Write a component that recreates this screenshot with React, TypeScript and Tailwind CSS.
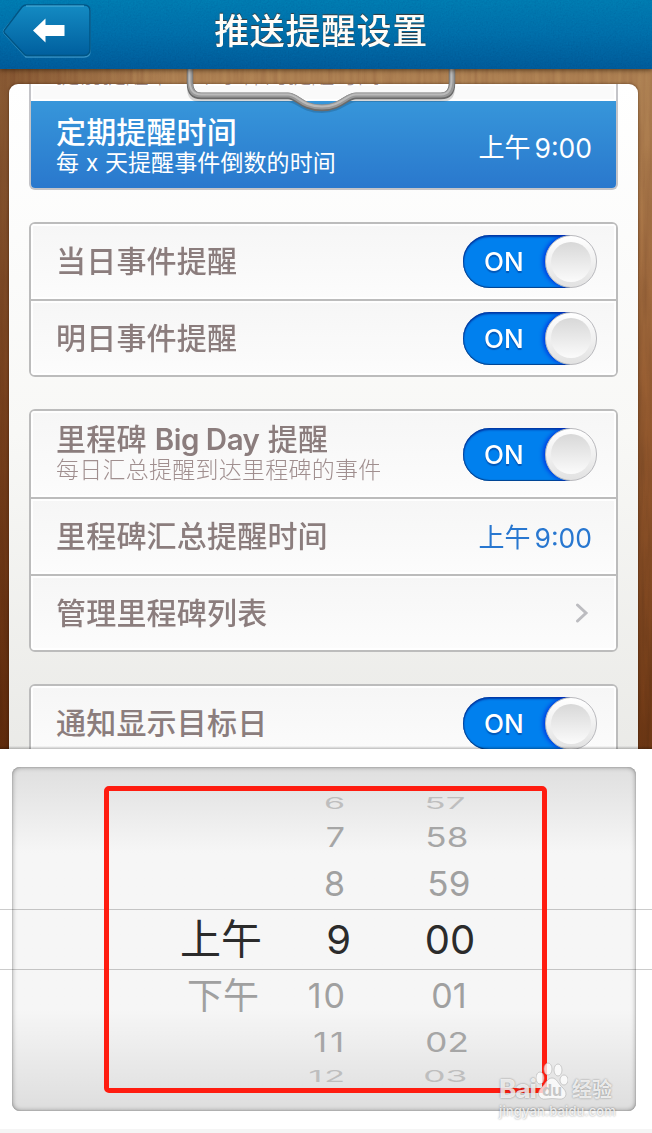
import React from "react";

const FONT = "font-['Inter','Noto_Sans_CJK_SC',sans-serif]";

function Header() {
  return (
    <header className="relative z-30 flex h-[69px] shrink-0 items-start justify-center bg-linear-to-b from-[#0070a8] via-[#0064a0] to-[#00528e] pr-[10px] shadow-[0_1px_5px_rgba(40,20,0,0.7)]">
      <svg className="absolute inset-0 opacity-20 mix-blend-overlay" width="652" height="69">
        <filter id="grain"><feTurbulence type="fractalNoise" baseFrequency="0.6" numOctaves="2" /><feColorMatrix values="0.33 0.33 0.33 0 0 0.33 0.33 0.33 0 0 0.33 0.33 0.33 0 0 0 0 0 0 1" /></filter>
        <rect width="652" height="69" filter="url(#grain)" />
      </svg>
      <svg className="absolute left-0 top-0" width="96" height="62" viewBox="0 0 96 62">
        <defs>
          <linearGradient id="btn" x1="0" y1="0" x2="0" y2="1">
            <stop offset="0" stopColor="#148bc3" />
            <stop offset="1" stopColor="#005f9e" />
          </linearGradient>
        </defs>
        <path d="M26 6 H84 Q90 6 90 12 V51 Q90 57 84 57 H26 L4 33 Q3 31.500 4 30 L22 8 Q24 5.500 26 6Z" fill="none" stroke="#4fa8d4" strokeOpacity=".7" strokeWidth="1.500" />
        <path d="M26 5 H84 Q90 5 90 11 V49 Q90 55.500 84 55.500 H27 Q25 55.500 23.500 53.500 L4.500 33 Q3.300 31.500 4.500 30 L22 7 Q24 5 26 5Z" fill="url(#btn)" stroke="#005585" strokeWidth="1.500" />
        <path d="M26 6 H84" stroke="#4fb2dc" strokeWidth="1" />
        <path d="M33 30.500 L45.500 18.500 V25 H64.500 V36 H45.500 V42.500Z" fill="#fff" />
      </svg>
      <h1 className="relative mt-[7px] text-[35px] leading-[48px] font-medium tracking-[0.6px] text-[#fffdf8] [text-shadow:0_-1px_1px_#3a3a3a]">推送提醒设置</h1>
    </header>
  );
}

function Toggle() {
  return (
    <div className="relative h-[53px] w-[134px] shrink-0">
      <div className="relative flex h-full w-[107px] items-center overflow-hidden rounded-l-full bg-[#0080ee] pl-[21px] shadow-[inset_0_2px_2px_rgba(0,20,130,0.65),inset_0_-1px_1px_rgba(0,50,120,0.8),inset_1px_0_1px_rgba(0,50,120,0.5)]">
        <span className="text-[26px] font-medium text-white [text-shadow:0_2px_1px_rgba(0,60,150,0.6)]">ON</span>
        <div className="absolute left-[82px] top-0 size-[53px] rounded-full shadow-[-2px_0_4px_rgba(0,30,220,0.75)]" />
      </div>
      <div className="absolute right-0 top-0 flex h-[53px] w-[52px] items-center justify-center rounded-full border border-[#b9b9bd] bg-linear-to-b from-white to-[#e2e2e2]">
        <div className="size-[40px] rounded-full bg-linear-to-b from-[#d8d8d8] to-[#fbfbfb]" />
      </div>
    </div>
  );
}

function Row({ title, sub, tall, last, children }: { title: React.ReactNode; sub?: string; tall?: boolean; last?: boolean; children: React.ReactNode }) {
  return (
    <div className={`flex items-center justify-between bg-linear-to-b from-[#f6f6f6] to-[#fcfcfc] pr-[19px] pl-[25px] shadow-[inset_0_0_0_2px_rgba(255,255,255,0.9)] ${tall ? "h-[88px]" : last ? "h-[74px]" : "h-[77px]"} ${last ? "" : "border-b-2 border-[#bcbcbc]"}`}>
      <div className="text-[#8b7d7d]">
        <div className={`text-[30px] font-medium tracking-[0.2px] whitespace-nowrap ${sub ? "mt-[-2px] leading-[34px]" : "-mt-[1px] leading-[40px]"}`}>{title}</div>
        {sub && <div className="text-[23px] leading-[28px] font-light tracking-[0.25px] text-[#a08f8f]">{sub}</div>}
      </div>
      {children}
    </div>
  );
}

const CARD = "mx-[20px] mt-[32px] shrink-0 overflow-hidden rounded-[6px] border-2 border-[#bcbcbc]";

function Time({ className }: { className: string }) {
  return <div className={`mr-[5px] flex items-center gap-[4px] text-[26.5px] leading-[36px] ${className}`}><span className="text-[26px]">上午</span><span>9:00</span></div>;
}

function Settings() {
  return (
    <main className="relative h-[680px] shrink-0 overflow-hidden bg-linear-to-b from-[#9f7048] via-[#7f4d28] to-[#5c2e10] pt-[15px]">
      <svg className="absolute inset-0 opacity-30 mix-blend-overlay" width="652" height="680">
        <filter id="wood"><feTurbulence type="fractalNoise" baseFrequency="0.18 0.012" numOctaves="3" seed="4" /><feColorMatrix values="0.33 0.33 0.33 0 0 0.33 0.33 0.33 0 0 0.33 0.33 0.33 0 0 0 0 0 0 1" /></filter>
        <rect width="652" height="680" filter="url(#wood)" />
      </svg>
      <div className="absolute inset-0 bg-linear-to-r from-[#4a1800]/40 via-transparent via-25% to-transparent" />
      <div className="relative ml-[9px] flex h-[700px] w-[629px] flex-col overflow-hidden rounded-t-[9px] bg-linear-to-b from-white via-[#f8f8f6] to-[#e9e9e6] shadow-[0_0_3px_rgba(40,15,0,0.6)]">
        <section className="mx-[20px] shrink-0 overflow-hidden rounded-b-[6px] border-x-2 border-b-2 border-[#c4c4c8]">
          <div className="relative h-[17px] overflow-hidden bg-[#fafafa] shadow-[inset_0_0_0_2px_#fff]">
            <p className="-mt-[23px] ml-[25px] text-[23px] leading-[28px] font-light tracking-[0.2px] text-[#a08f8f]">提前提醒下一个事件的提醒时间</p>
          </div>
          <div className="flex h-[87px] items-center justify-between bg-linear-to-b from-[#3796da] to-[#2a78cd] pr-[19px] pl-[25px] text-white">
            <div className="mt-[2px]">
              <div className="text-[30px] leading-[34px] font-medium tracking-[0.15px]">定期提醒时间</div>
              <div className="text-[23px] leading-[28px] tracking-[0.1px]">每 x 天提醒事件倒数的时间</div>
            </div>
            <Time className="mt-[7px] text-white" />
          </div>
        </section>
        <section className={CARD}>
          <Row title="当日事件提醒"><Toggle /></Row>
          <Row title="明日事件提醒" last><Toggle /></Row>
        </section>
        <section className={CARD}>
          <Row title={<>里程碑 <span className="text-[29.5px] font-semibold tracking-[-0.5px]">Big Day</span> 提醒</>} sub="每日汇总提醒到达里程碑的事件" tall><Toggle /></Row>
          <Row title="里程碑汇总提醒时间"><Time className="mt-[2px] text-[#2877d0]" /></Row>
          <Row title="管理里程碑列表" last>
            <svg className="-mt-[1px] mr-[8px]" width="14" height="20" viewBox="0 0 14 20" fill="none" stroke="#bcbcc0" strokeWidth="3"><path d="M2.500 2 L11 10 L2.500 18" strokeLinecap="round" /></svg>
          </Row>
        </section>
        <section className={CARD}>
          <Row title="通知显示目标日"><Toggle /></Row>
        </section>
      </div>
      <svg className="absolute left-[180px] top-0" width="282" height="56" viewBox="0 0 282 56" fill="none" strokeLinejoin="round">
        <path d="M10 -5 V19 Q10 30 20 30 H108 C118 30 121 41 142 41 C161 41 166 30 176 30 H261 Q272 30 272 19 V-5" stroke="#000" strokeOpacity=".15" strokeWidth="6" />
        <path d="M10 -8 V14 Q10 27 21 27 H108 C118 27 121 39 142 39 C161 39 166 27 176 27 H261 Q272 27 272 14 V-8" stroke="#6a6a6a" strokeWidth="6.500" />
        <path d="M10 -8 V13 Q10 26 21 26 H108 C118 26 121 38 142 38 C161 38 166 26 176 26 H261 Q272 26 272 13 V-8" stroke="#989898" strokeWidth="5" />
        <path d="M9.500 -8 V12 Q10 25.500 21 25.500 H108 C118 25.500 121 37.500 142 37.500 C161 37.500 166 25.500 176 25.500 H261 Q271 25.500 271.500 12 V-8" stroke="#bababa" strokeWidth="2" />
      </svg>
      <div className="absolute inset-x-0 bottom-0 h-[3px] bg-linear-to-b from-transparent to-black/25" />
    </main>
  );
}

const WHEEL = [
  { h: "6", m: "57", row: "h-[26px]", hour: "scale-y-[0.48]", min: "scale-y-[0.48] scale-x-[1.02] -translate-x-[4px]", color: "text-[#bebebe]" },
  { h: "7", m: "58", row: "h-[42px]", hour: "scale-y-[0.8]", min: "scale-y-[0.8] scale-x-[1.03] -translate-x-[2px]", color: "text-[#a6a6a6]" },
  { h: "8", m: "59", row: "h-[51px]", hour: "", min: "scale-x-[1.03]", color: "text-[#a0a0a0]" },
  { a: "上午", h: "9", m: "00", row: "h-[61px]", hour: "", min: "", color: "text-[#2b2b2b]", active: true },
  { a: "下午", h: "10", m: "01", row: "h-[51px]", hour: "tracking-[2px] -mr-[2px]", min: "", color: "text-[#a0a0a0]" },
  { h: "11", m: "02", row: "h-[42px]", hour: "scale-y-[0.8] tracking-[3px] -mr-[2px]", min: "scale-y-[0.8] scale-x-[1.03] -translate-x-[2px]", color: "text-[#a6a6a6]" },
  { h: "12", m: "03", row: "h-[26px]", hour: "scale-y-[0.48] tracking-[2px] -mr-[2px]", min: "scale-y-[0.48] scale-x-[1.04] -translate-x-[4px]", color: "text-[#bebebe]" },
];

function Picker() {
  return (
    <div className="relative flex grow flex-col border-b-4 border-[#f5f5f5] bg-white pt-[18px]">
      <div className="ml-[12px] h-[344px] w-[624px] rounded-[8px] bg-linear-to-b from-[#dfdfdf] via-[#f6f6f6] via-25% to-[#f6f6f6] to-70% shadow-[inset_0_0_5px_rgba(0,0,0,0.4),inset_0_0_1px_#888]">
        <div className="h-full rounded-[8px] bg-linear-to-b from-transparent from-70% to-black/10 pt-[23px]">
          {WHEEL.map((w) => (
            <div key={w.h} className={`flex items-center leading-none ${w.row} ${w.color} ${w.active ? "-ml-[12px] -mr-[16px] border-y border-black/20 pl-[12px] text-[40px]" : "text-[34px]"}`}>
              <span className={`ml-[80px] w-[170px] shrink-0 text-right ${w.active ? "text-[41px]" : "pr-[3px] text-[36px]"}`}>{w.a}</span>
              <span className={`flex shrink-0 justify-end ${w.active ? "w-[89px]" : "w-[83px]"}`}><span className={w.hour}>{w.h}</span></span>
              <span className={`flex w-[110px] shrink-0 justify-center ${w.active ? "ml-[44px]" : "ml-[49px]"}`}><span className={w.min}>{w.m}</span></span>
            </div>
          ))}
        </div>
      </div>
    </div>
  );
}

function Watermark() {
  return (
    <div className="absolute left-[499px] top-[1060px] z-50 w-[130px] text-white/80 [text-shadow:0_0_2px_rgba(0,0,0,0.45)]">
      <div className="flex h-[42px] items-end">
        <span className="text-[26px] leading-[26px] font-extrabold tracking-[-1px]">Bai</span>
        <span className="relative flex h-[42px] w-[32px] items-end justify-center">
          <svg className="absolute inset-0" width="32" height="42" viewBox="0 0 32 42" fill="#fff" fillOpacity=".75" stroke="#b0b0b0" strokeOpacity=".6">
            <ellipse cx="4" cy="18" rx="4" ry="6" /><ellipse cx="12" cy="9" rx="4" ry="6" /><ellipse cx="22" cy="10" rx="4" ry="6" /><ellipse cx="28" cy="20" rx="4" ry="5" />
            <path d="M16 18 C21 18 22 24 27 28 C33 34 29 40 23 39 Q16 38 10 39 C3 40 0 34 5 28 C10 24 11 18 16 18Z" />
          </svg>
          <span className="relative mb-[3px] text-[16px] leading-[18px] font-bold text-[#c6c6c6] [text-shadow:none]">du</span>
        </span>
        <span className="ml-[4px] text-[20px] leading-[24px] font-bold">经验</span>
      </div>
      <div className="mt-[1px] text-[13px] leading-[16px] font-medium tracking-[0.15px]">jingyan.baidu.com</div>
    </div>
  );
}

export default function App() {
  return (
    <div className={`relative flex h-[1133px] w-[652px] flex-col overflow-hidden bg-white ${FONT}`}>
      <Header />
      <Settings />
      <Picker />
      <div className="pointer-events-none absolute left-[104px] top-[786px] z-40 h-[307px] w-[443px] rounded-[5px] border-5 border-[#ff1c10]" />
      <Watermark />
    </div>
  );
}
